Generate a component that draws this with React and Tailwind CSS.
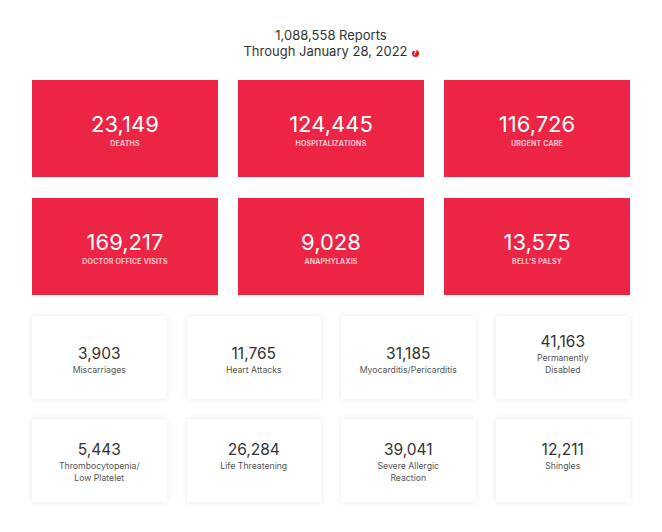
import React from 'react';

const redStats = [
  { value: '23,149', label: 'Deaths' },
  { value: '124,445', label: 'Hospitalizations' },
  { value: '116,726', label: 'Urgent Care' },
  { value: '169,217', label: 'Doctor Office Visits' },
  { value: '9,028', label: 'Anaphylaxis' },
  { value: '13,575', label: "Bell's Palsy" },
];

const rowOne = [
  { value: '3,903', label: ['Miscarriages'] },
  { value: '11,765', label: ['Heart Attacks'] },
  { value: '31,185', label: ['Myocarditis/Pericarditis'] },
  { value: '41,163', label: ['Permanently', 'Disabled'] },
];

const rowTwo = [
  { value: '5,443', label: ['Thrombocytopenia/', 'Low Platelet'] },
  { value: '26,284', label: ['Life Threatening'] },
  { value: '39,041', label: ['Severe Allergic', 'Reaction'] },
  { value: '12,211', label: ['Shingles'] },
];

const HelpDot = () => (
  <span className="inline-flex items-center justify-center w-[7px] h-[7px] rounded-full bg-[#e01b1b] text-white text-[6px] font-bold leading-none ml-[4px] align-middle relative top-[1px]">
    ?
  </span>
);

const WhiteCard = ({ stat, bottom }) => (
  <div
    className={`h-[83px] bg-white shadow-[0_0_6px_rgba(0,0,0,0.09)] flex flex-col items-center text-center ${
      bottom ? 'justify-end pb-[23px]' : 'justify-start pt-[21px]'
    }`}
  >
    <div className="text-[15.5px] leading-[20px] text-[#333]">{stat.value}</div>
    {stat.label.map((line) => (
      <div key={line} className="text-[8.7px] leading-[12px] text-[#555]">{line}</div>
    ))}
  </div>
);

export default function App() {
  return (
    <div
      className="min-h-[532px] bg-white px-[32px] pt-[27px] pb-[30px]"
      style={{ fontFamily: 'Inter, "Noto Sans", sans-serif' }}
    >
      <div className="text-center text-[13px] leading-[16px] text-[#333]">
        <div>1,088,558 Reports</div>
        <div>
          Through January 28, 2022
          <HelpDot />
        </div>
      </div>

      <div className="grid grid-cols-3 gap-x-[20px] gap-y-[21px] mt-[21px]">
        {redStats.map((s) => (
          <div key={s.label} className="h-[97px] bg-[#ec2545] flex flex-col items-center justify-center text-white pt-[3px]">
            <div className="text-[22px] leading-[26px]">{s.value}</div>
            <div className="text-[7px] leading-[10px] font-semibold uppercase tracking-[0.03em] text-white/80 mt-[2px]">
              {s.label}
            </div>
          </div>
        ))}
      </div>

      <div className="grid grid-cols-4 gap-[20px] mt-[21px]">
        {rowOne.map((s) => (
          <WhiteCard key={s.value} stat={s} bottom />
        ))}
      </div>

      <div className="grid grid-cols-4 gap-[20px] mt-[20px]">
        {rowTwo.map((s) => (
          <WhiteCard key={s.value} stat={s} />
        ))}
      </div>
    </div>
  );
}
